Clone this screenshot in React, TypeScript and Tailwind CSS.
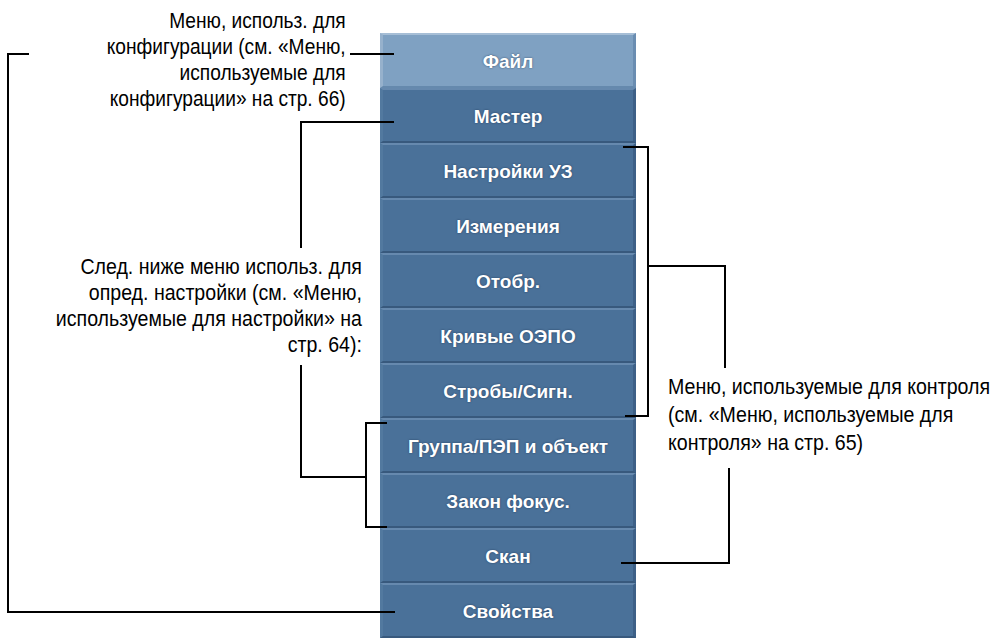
import React from "react";

const buttons = [
  "Файл",
  "Мастер",
  "Настройки УЗ",
  "Измерения",
  "Отобр.",
  "Кривые ОЭПО",
  "Стробы/Сигн.",
  "Группа/ПЭП и объект",
  "Закон фокус.",
  "Скан",
  "Свойства",
];

// connector line segments [x, y, w, h]
const segs: [number, number, number, number][] = [
  [7, 53, 22, 2],
  [7, 53, 2, 560],
  [7, 611, 388, 2],
  [350, 53, 44, 2],
  [300, 121, 94, 2],
  [300, 121, 2, 127],
  [300, 365, 2, 113],
  [300, 476, 67, 2],
  [365, 422, 2, 106],
  [365, 422, 22, 2],
  [365, 526, 22, 2],
  [623, 146, 26, 2],
  [647, 146, 2, 271],
  [625, 415, 24, 2],
  [647, 265, 79, 2],
  [724, 265, 2, 103],
  [621, 562, 109, 2],
  [728, 468, 2, 96],
];

function MenuButton({ label, active }: { label: string; active?: boolean }) {
  return (
    <div
      className={
        active
          ? "h-[55px] flex items-center justify-center bg-[#7fa1c2] border-t-2 border-t-[#a6bed6] border-b-2 border-b-[#6589ad] border-l-[3px] border-l-[#96b1cc] border-r-[3px] border-r-[#6a8db1]"
          : "h-[55px] flex items-center justify-center bg-[#4a7199] border-t-2 border-t-[#6689ae] border-b-2 border-b-[#38597d] border-l-[3px] border-l-[#52799f] border-r-[3px] border-r-[#3d6087]"
      }
    >
      <span className="pt-[3px] text-white font-bold text-[19px] font-['Liberation_Sans',Arial,sans-serif] [text-shadow:0_0_2px_rgba(20,40,70,0.7)]">
        {label}
      </span>
    </div>
  );
}

export default function App() {
  return (
    <div className="relative w-[997px] h-[638px] overflow-hidden bg-white font-['Liberation_Sans',Arial,sans-serif] text-black">
      <div className="flex h-full">
        {/* left callouts */}
        <div className="w-[380px] shrink-0 flex flex-col items-end">
          <div className="mt-[8px] mr-[34px] origin-right scale-x-[0.87] text-right text-[22px] leading-[26px] whitespace-nowrap">
            Меню, использ. для
            <br />
            конфигурации (см. «Меню,
            <br />
            используемые для
            <br />
            конфигурации» на стр. 66)
          </div>
          <div className="mt-[142px] mr-[18px] origin-right scale-x-[0.89] text-right text-[22px] leading-[26px] whitespace-nowrap">
            След. ниже меню использ. для
            <br />
            опред. настройки (см. «Меню,
            <br />
            используемые для настройки» на
            <br />
            стр. 64):
          </div>
        </div>

        {/* menu column */}
        <div className="w-[256px] shrink-0 pt-[33px] flex flex-col">
          {buttons.map((b, i) => (
            <MenuButton key={b} label={b} active={i === 0} />
          ))}
        </div>

        {/* right callout */}
        <div className="pl-[32px] pt-[373px]">
          <div className="origin-left scale-x-[0.89] text-left text-[22px] leading-[28px] whitespace-nowrap">
            Меню, используемые для контроля
            <br />
            (см. «Меню, используемые для
            <br />
            контроля» на стр. 65)
          </div>
        </div>
      </div>

      {/* connector lines drawing */}
      <svg
        className="absolute inset-0 pointer-events-none"
        width="997"
        height="638"
        viewBox="0 0 997 638"
        shapeRendering="crispEdges"
      >
        {segs.map(([x, y, w, h], i) => (
          <rect key={i} x={x} y={y} width={w} height={h} fill="#000" />
        ))}
      </svg>
    </div>
  );
}
